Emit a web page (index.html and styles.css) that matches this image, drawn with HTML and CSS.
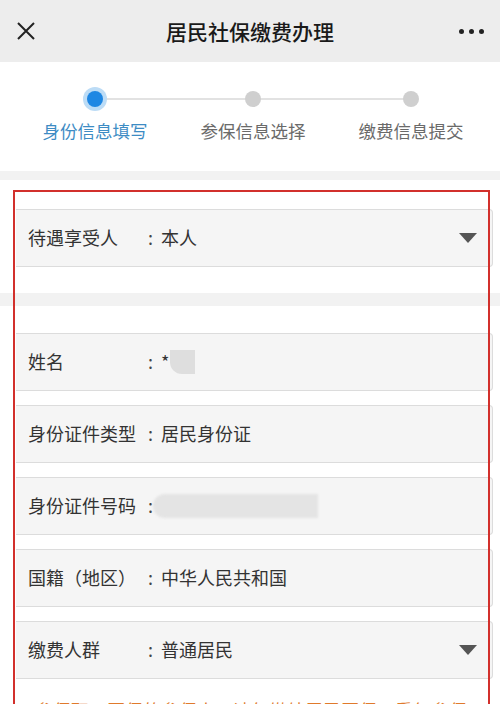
FILE: index.html
```html
<!DOCTYPE html>
<html lang="zh-CN">
<head>
<meta charset="utf-8">
<title>居民社保缴费办理</title>
<link rel="stylesheet" href="styles.css">
</head>
<body>
<div class="page">
  <header class="nav">
    <svg class="close" width="18" height="18" viewBox="0 0 18 18"><path d="M1 1L17 17M17 1L1 17" stroke="#222" stroke-width="2" fill="none"/></svg>
    <div class="title">居民社保缴费办理</div>
    <div class="more"><span></span><span></span><span></span></div>
  </header>

  <section class="steps">
    <div class="track"></div>
    <div class="step active"><div class="dot"></div><div class="slabel">身份信息填写</div></div>
    <div class="step"><div class="dot"></div><div class="slabel">参保信息选择</div></div>
    <div class="step"><div class="dot"></div><div class="slabel">缴费信息提交</div></div>
  </section>

  <div class="band band-top"></div>

  <section class="group group-first">
    <div class="field">
      <span class="label">待遇享受人</span><span class="colon">:</span><span class="value">本人</span>
      <span class="caret"></span>
    </div>
  </section>

  <div class="band band-mid"></div>

  <section class="group group-second">
    <div class="field">
      <span class="label">姓名</span><span class="colon">:</span><span class="value">*<span class="mask mask-name"></span></span>
    </div>
    <div class="field">
      <span class="label">身份证件类型</span><span class="colon">:</span><span class="value">居民身份证</span>
    </div>
    <div class="field">
      <span class="label">身份证件号码</span><span class="colon">:</span><span class="value"><span class="mask mask-id"></span></span>
    </div>
    <div class="field">
      <span class="label">国籍（地区）</span><span class="colon">:</span><span class="value">中华人民共和国</span>
    </div>
    <div class="field">
      <span class="label">缴费人群</span><span class="colon">:</span><span class="value">普通居民</span>
      <span class="caret"></span>
    </div>
    <p class="notice">参保职工医保的参保人，请勿缴纳居民医保，重复参保</p>
  </section>

  <div class="redframe"></div>
</div>
</body>
</html>
```

FILE: styles.css
```css
* { box-sizing: border-box; }
html, body { margin: 0; padding: 0; }
body {
  width: 500px;
  height: 704px;
  overflow: hidden;
  background: #fff;
  font-family: "Noto Sans CJK SC", "Noto Sans", sans-serif;
  color: #333;
}
.page { position: relative; width: 500px; height: 704px; overflow: hidden; }

.nav {
  height: 62px;
  background: #ededed;
  display: flex;
  align-items: center;
  justify-content: space-between;
  padding: 0 16px 0 17px;
  position: relative;
}
.close { display: block; }
.title {
  position: absolute;
  left: 0; right: 0;
  text-align: center;
  font-size: 21px;
  font-weight: 500;
  color: #1a1a1a;
  line-height: 62px;
  pointer-events: none;
}
.more { display: flex; gap: 5px; }
.more span { width: 5px; height: 5px; border-radius: 50%; background: #222; }

.steps {
  height: 109px;
  display: flex;
  padding: 0 10px 0 16px;
  position: relative;
}
.track {
  position: absolute;
  left: 95px; right: 88px;
  top: 36px;
  height: 2px;
  background: #e2e2e2;
}
.step {
  flex: 1;
  display: flex;
  flex-direction: column;
  align-items: center;
  position: relative;
}
.dot {
  width: 16px; height: 16px;
  border-radius: 50%;
  background: #cfcfcf;
  margin-top: 29px;
}
.step.active .dot {
  background: #1e87e3;
  box-shadow: 0 0 0 4px #bcdcf6;
}
.slabel {
  margin-top: 11px;
  font-size: 17.5px;
  line-height: 26px;
  color: #6a6a6a;
}
.step.active .slabel { color: #3d8cc4; }

.band { background: #f2f2f2; }
.band-top { height: 9px; }
.band-mid { height: 13px; }

.group { padding: 0 7px 0 16px; }
.group-first { padding-top: 29px; padding-bottom: 26px; }
.group-second { padding-top: 27px; display: flex; flex-direction: column; gap: 14px; }

.field {
  height: 58px;
  background: #f5f5f5;
  border: 1px solid #dcdcdc;
  border-left: none;
  border-radius: 0 4px 4px 0;
  display: flex;
  align-items: center;
  padding-left: 12px;
  padding-right: 15px;
  padding-bottom: 3px;
  font-size: 18px;
  color: #333;
}
.label { width: 120px; white-space: nowrap; }
.colon { width: 13px; color: #444; }
.value { flex: 1; display: flex; align-items: center; white-space: nowrap; }
.caret {
  width: 0; height: 0;
  border-left: 9px solid transparent;
  border-right: 9px solid transparent;
  border-top: 10px solid #555;
  margin-top: 2px;
}
.mask { display: inline-block; background: #dedede; }
.mask-name {
  width: 25px; height: 24px;
  border-radius: 0 0 0 12px;
  margin-left: 1px;
  margin-top: 3px;
}
.mask-id {
  width: 165px; height: 24px;
  border-radius: 12px 0 0 12px;
  background: #e4e4e4;
  margin-left: -8px;
  margin-top: 3px;
  filter: blur(1px);
}
.notice {
  margin: 2px 0 0 19px;
  font-size: 18px;
  line-height: 30px;
  color: #e07a2c;
  white-space: nowrap;
}

.redframe {
  position: absolute;
  left: 13px;
  top: 190px;
  width: 477px;
  height: 600px;
  border: 2px solid #d2302c;
  pointer-events: none;
}
```
